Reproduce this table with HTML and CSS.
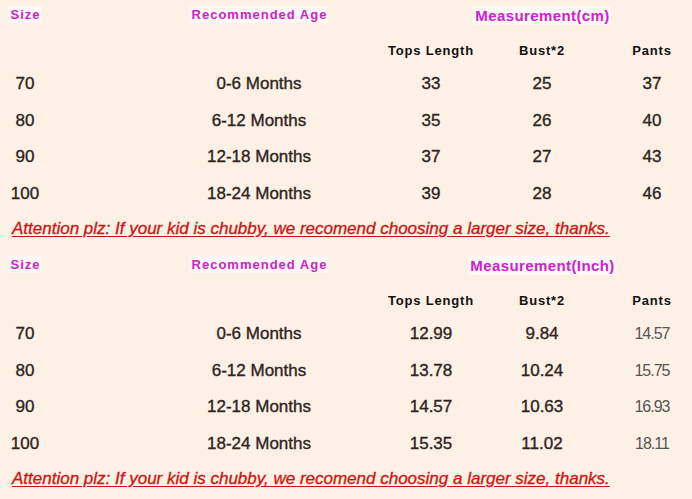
FILE: index.html
```html
<!DOCTYPE html>
<html>
<head>
<meta charset="utf-8">
<link rel="stylesheet" href="styles.css">
</head>
<body>
<section class="chart">
  <div class="hd c1"><span class="hl">Size</span></div>
  <div class="hd c3"><span class="hl">Recommended Age</span></div>
  <div class="mhd c5"><span class="hl">Measurement(cm)</span></div>

  <div class="sub c4">Tops Length</div>
  <div class="sub c5">Bust*2</div>
  <div class="sub c7">Pants</div>

  <div class="d c1">70</div><div class="d c3">0-6 Months</div><div class="d c4">33</div><div class="d c5">25</div><div class="d c7">37</div>
  <div class="d c1">80</div><div class="d c3">6-12 Months</div><div class="d c4">35</div><div class="d c5">26</div><div class="d c7">40</div>
  <div class="d c1">90</div><div class="d c3">12-18 Months</div><div class="d c4">37</div><div class="d c5">27</div><div class="d c7">43</div>
  <div class="d c1">100</div><div class="d c3">18-24 Months</div><div class="d c4">39</div><div class="d c5">28</div><div class="d c7">46</div>

  <div class="note">Attention plz: If your kid is chubby, we recomend choosing a larger size, thanks.</div>
</section>
<section class="chart">
  <div class="hd c1"><span class="hl">Size</span></div>
  <div class="hd c3"><span class="hl">Recommended Age</span></div>
  <div class="mhd c5"><span class="hl">Measurement(Inch)</span></div>

  <div class="sub c4">Tops Length</div>
  <div class="sub c5">Bust*2</div>
  <div class="sub c7">Pants</div>

  <div class="d c1">70</div><div class="d c3">0-6 Months</div><div class="d c4">12.99</div><div class="d c5">9.84</div><div class="d c7 thin">14.57</div>
  <div class="d c1">80</div><div class="d c3">6-12 Months</div><div class="d c4">13.78</div><div class="d c5">10.24</div><div class="d c7 thin">15.75</div>
  <div class="d c1">90</div><div class="d c3">12-18 Months</div><div class="d c4">14.57</div><div class="d c5">10.63</div><div class="d c7 thin">16.93</div>
  <div class="d c1">100</div><div class="d c3">18-24 Months</div><div class="d c4">15.35</div><div class="d c5">11.02</div><div class="d c7 thin">18.11</div>

  <div class="note">Attention plz: If your kid is chubby, we recomend choosing a larger size, thanks.</div>
</section>
</body>
</html>
```

FILE: styles.css
```css
html, body {
  margin: 0;
  padding: 0;
  background: #fdf0e4;
}
body {
  width: 692px;
  height: 499px;
  overflow: hidden;
  font-family: "Liberation Sans", Arial, sans-serif;
}
.chart {
  display: grid;
  grid-template-columns: 50px 100px 218px 126px 96px 22px 80px;
  grid-template-rows: 28px 38px 36.5px 36.5px 36.5px 36.5px 38px;
  height: 250px;
}
.chart > div {
  display: flex;
  align-items: center;
  justify-content: center;
  white-space: nowrap;
}
.c1 { grid-column: 1; }
.c3 { grid-column: 3; }
.c4 { grid-column: 4; }
.c5 { grid-column: 5; }
.c7 { grid-column: 7; }
.hd {
  font-size: 13px;
  font-weight: bold;
  letter-spacing: 1px;
  color: #cc22cc;
}
.mhd {
  font-size: 15px;
  font-weight: bold;
  letter-spacing: 0.4px;
  color: #cc22cc;
  padding-top: 3px;
}
.hl {
  background: #fff8f6;
  padding: 1px 1px 1px 2px;
}
.sub {
  font-size: 13px;
  font-weight: bold;
  letter-spacing: 0.8px;
  color: #111;
  padding-top: 6px;
}
.d {
  font-size: 17px;
  font-weight: normal;
  color: #2e2422;
  -webkit-text-stroke: 0.35px #2e2422;
}
.d.thin {
  font-size: 16px;
  color: #555;
  -webkit-text-stroke: 0;
  letter-spacing: -1px;
}
.note {
  grid-column: 1 / -1;
  justify-content: flex-start !important;
  padding-left: 12px;
  padding-bottom: 4px;
  font-size: 17px;
  font-style: italic;
  color: #cc1414;
  -webkit-text-stroke: 0.3px #cc1414;
  text-decoration: underline;
  text-underline-offset: 2px;
}
```
